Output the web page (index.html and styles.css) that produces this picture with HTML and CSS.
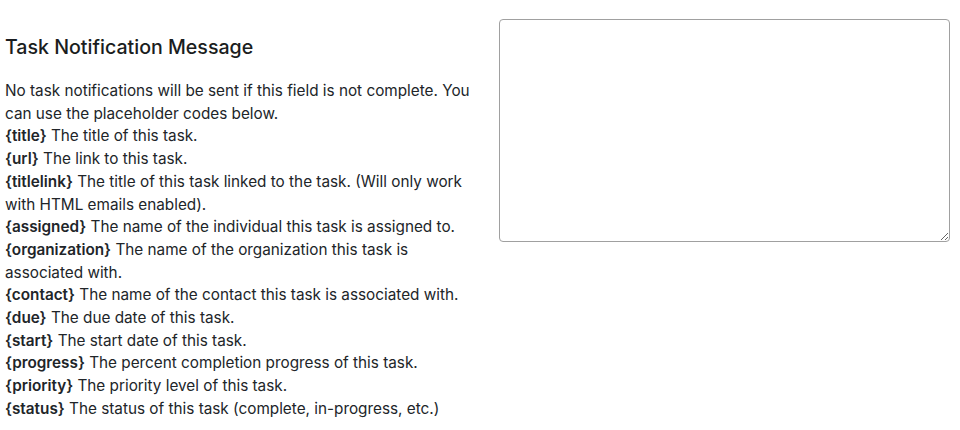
FILE: index.html
```html
<!DOCTYPE html>
<html>
<head>
<meta charset="utf-8">
<link rel="stylesheet" href="styles.css">
</head>
<body>
<div class="row">
  <div class="info">
    <h3 class="title">Task Notification Message</h3>
    <p class="desc">No task notifications will be sent if this field is not complete. You can use the placeholder codes below.<br>
    <b>{title}</b> The title of this task.<br>
    <b>{url}</b> The link to this task.<br>
    <b>{titlelink}</b> The title of this task linked to the task. (Will only work with HTML emails enabled).<br>
    <b>{assigned}</b> The name of the individual this task is assigned to.<br>
    <b>{organization}</b> The name of the organization this task is associated with.<br>
    <b>{contact}</b> The name of the contact this task is associated with.<br>
    <b>{due}</b> The due date of this task.<br>
    <b>{start}</b> The start date of this task.<br>
    <b>{progress}</b> The percent completion progress of this task.<br>
    <b>{priority}</b> The priority level of this task.<br>
    <b>{status}</b> The status of this task (complete, in-progress, etc.)</p>
  </div>
  <div class="field">
    <textarea class="msg"></textarea>
  </div>
</div>
</body>
</html>
```
FILE: styles.css
```css
html, body {
  margin: 0;
  padding: 0;
  background: #fff;
}
body {
  font-family: Inter, "Noto Sans", sans-serif;
  color: #212529;
  font-size: 15.3px;
}
.row {
  display: flex;
  align-items: flex-start;
  padding-top: 19px;
}
.info {
  width: 475px;
  padding-left: 5px;
}
.title {
  margin: 16px 0 0;
  font-size: 19.6px;
  font-weight: 500;
  line-height: 24px;
  color: #1a1d20;
}
.desc {
  margin: 21px 0 0;
  line-height: 22.7px;
}
.desc b {
  font-weight: 600;
}
.field {
  margin-left: 19px;
}
.msg {
  display: block;
  box-sizing: border-box;
  width: 451px;
  height: 223px;
  border: 1px solid #a0a0a0;
  border-radius: 4px;
  resize: vertical;
  margin: 0;
}
```
